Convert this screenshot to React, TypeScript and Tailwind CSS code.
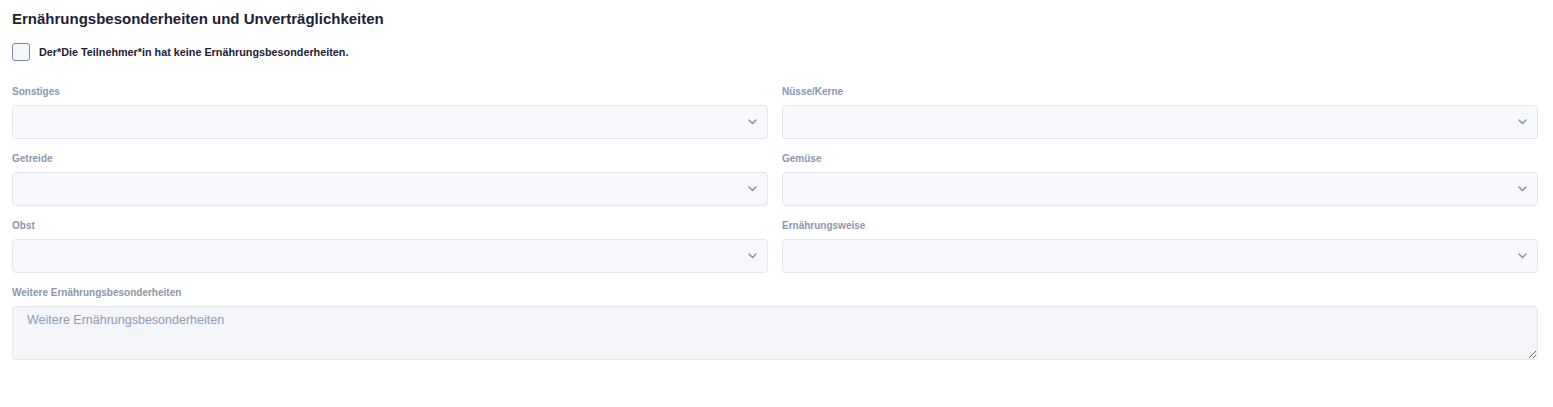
import React from "react";

const Chevron = () => (
  <svg width="9" height="6" viewBox="0 0 9 6" className="absolute right-[10px] top-1/2 -translate-y-1/2">
    <path d="M1 1l3.5 3.5L8 1" fill="none" stroke="#8a93a8" strokeWidth="1.5" strokeLinecap="round" strokeLinejoin="round" />
  </svg>
);

const Field = ({ label }: { label: string }) => (
  <div className="flex flex-col">
    <label className="h-[14px] text-[10px] font-bold leading-[14px] text-[#8d96ab]">{label}</label>
    <div className="relative mt-[6px] h-[34px] rounded-[4px] border border-[#e3e6ee] bg-[#f7f8fc]">
      <Chevron />
    </div>
  </div>
);

export default function App() {
  return (
    <div className="min-h-[407px] bg-white px-[12px] pt-[9px]" style={{ fontFamily: '"Liberation Sans", Arial, sans-serif' }}>
      <h2 className="text-[15px] font-bold leading-[20px] text-[#1d2134]">Ernährungsbesonderheiten und Unverträglichkeiten</h2>
      <div className="mt-[14px] flex items-center gap-[9px]">
        <div className="h-[18px] w-[18px] rounded-[3px] border border-[#7f89a6] bg-[#f5f6fa]" />
        <span className="text-[10.8px] font-bold text-[#1d2134]">Der*Die Teilnehmer*in hat keine Ernährungsbesonderheiten.</span>
      </div>
      <div className="mt-[24px] grid grid-cols-2 gap-x-[14px] gap-y-[13px] pr-[3px]">
        <Field label="Sonstiges" />
        <Field label="Nüsse/Kerne" />
        <Field label="Getreide" />
        <Field label="Gemüse" />
        <Field label="Obst" />
        <Field label="Ernährungsweise" />
      </div>
      <div className="mt-[13px] flex flex-col pr-[3px]">
        <label className="h-[14px] text-[10px] font-bold leading-[14px] text-[#8d96ab]">Weitere Ernährungsbesonderheiten</label>
        <textarea
          placeholder="Weitere Ernährungsbesonderheiten"
          className="mt-[6px] h-[54px] rounded-[4px] border border-[#e3e6ee] bg-[#f4f5f9] px-[14px] py-[4px] text-[12.5px] text-[#1d2134] placeholder:text-[#8f9bb6] outline-none"
        />
      </div>
    </div>
  );
}
